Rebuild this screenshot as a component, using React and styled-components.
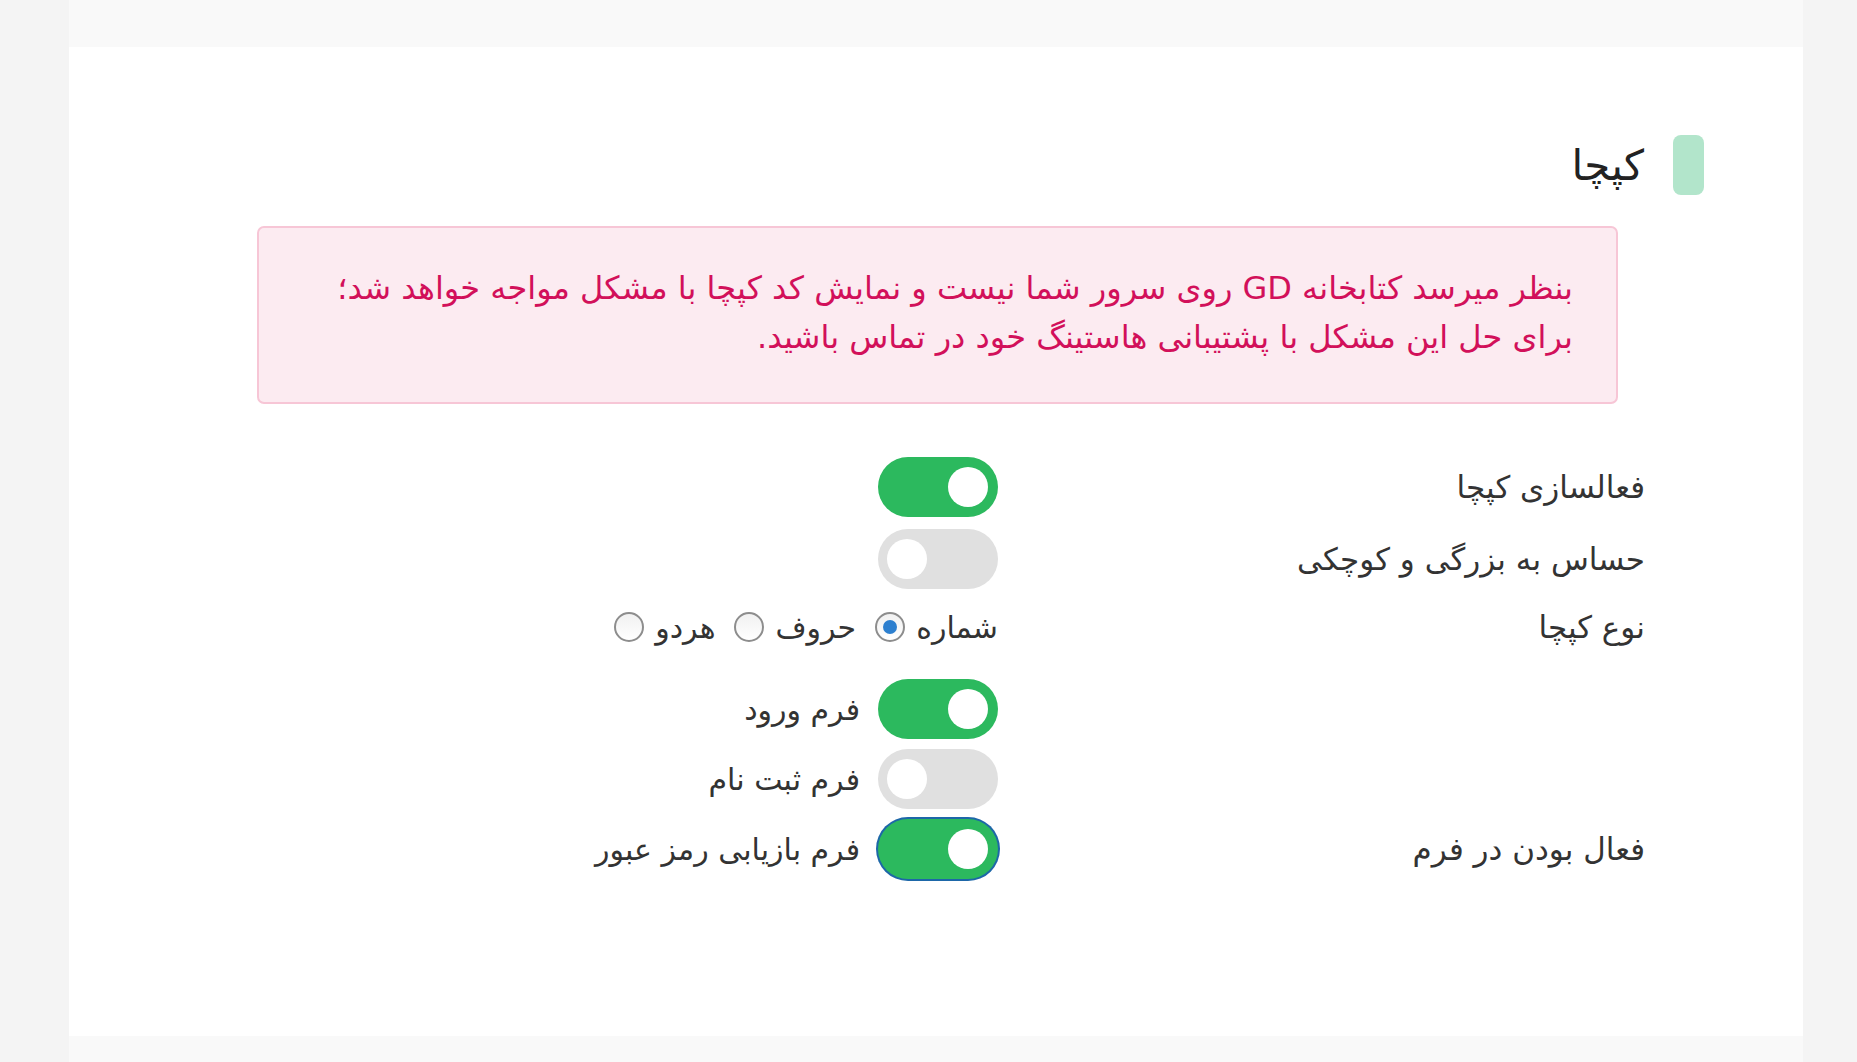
import React, { useState } from "react";
import styled, { createGlobalStyle } from "styled-components";

const GlobalStyle = createGlobalStyle`
  html, body {
    margin: 0;
    padding: 0;
    background: #f4f4f4;
  }
  body {
    font-family: "DejaVu Sans", "Noto Sans", sans-serif;
  }
`;

const Page = styled.div`
  margin-left: 69px;
  width: 1734px;
  min-height: 1062px;
  padding-top: 47px;
  box-sizing: border-box;
  background: #f9f9f9;
`;

const Card = styled.div`
  direction: rtl;
  background: #fff;
  height: 989px;
  box-sizing: border-box;
  padding: 88px 99px 0 0;
`;

const TitleRow = styled.div`
  display: flex;
  align-items: center;
  gap: 29px;
  height: 60px;
`;

const TitleBar = styled.span`
  width: 31px;
  height: 60px;
  border-radius: 8px;
  background: #b2e5cb;
`;

const Title = styled.h2`
  margin: 0;
  font-size: 42px;
  font-weight: normal;
  color: #222;
`;

const Alert = styled.div`
  margin: 31px 86px 53px 0;
  width: 1361px;
  box-sizing: border-box;
  padding: 36px 43px 0 20px;
  height: 178px;
  border: 2px solid #f7c6d6;
  border-radius: 7px;
  background: #fcebf1;
  color: #d2105a;
  font-size: 32px;
  line-height: 49px;
  white-space: nowrap;
`;

const Form = styled.div`
  padding-right: 59px;
`;

const Row = styled.div`
  display: flex;
  align-items: center;
  height: ${(p) => p.$h || 60}px;
  margin-top: ${(p) => p.$mt || 0}px;
`;

const Label = styled.div`
  width: 647px;
  flex: none;
  font-size: 31px;
  color: #333;
`;

const Controls = styled.div`
  display: flex;
  align-items: center;
`;

const Track = styled.button`
  position: relative;
  width: 120px;
  height: 60px;
  padding: 0;
  border: none;
  border-radius: 30px;
  cursor: pointer;
  background: ${(p) => (p.$on ? "#2cb95e" : "#e0e0e0")};
  box-shadow: ${(p) => (p.$focus ? "0 0 0 2px #1d67a8" : "none")};
  flex: none;
`;

const Knob = styled.span`
  position: absolute;
  top: 10px;
  width: 40px;
  height: 40px;
  border-radius: 50%;
  background: #fff;
  ${(p) => (p.$on ? "left: 70px;" : "left: 9px;")}
`;

const ToggleText = styled.span`
  margin-right: 18px;
  font-size: 30px;
  color: #333;
`;

const RadioGroup = styled.div`
  display: flex;
  align-items: center;
  gap: 19px;
`;

const RadioOption = styled.label`
  display: flex;
  align-items: center;
  gap: 11px;
  font-size: 30px;
  color: #333;
  cursor: pointer;
`;

const RadioCircle = styled.span`
  position: relative;
  width: 30px;
  height: 30px;
  box-sizing: border-box;
  border-radius: 50%;
  border: 2px solid #8d8d8d;
  background: linear-gradient(#f1f1f1, #ffffff);
  flex: none;
  &::after {
    content: "";
    display: ${(p) => (p.$checked ? "block" : "none")};
    position: absolute;
    top: 6px;
    left: 6px;
    width: 14px;
    height: 14px;
    border-radius: 50%;
    background: #2c7fcf;
  }
`;

function Toggle({ on, focus, onClick }) {
  return (
    <Track $on={on} $focus={focus} onClick={onClick}>
      <Knob $on={on} />
    </Track>
  );
}

export default function App() {
  const [state, setState] = useState({
    active: true,
    sensitive: false,
    login: true,
    register: false,
    recover: true,
  });
  const [type, setType] = useState("num");
  const flip = (k) => setState((s) => ({ ...s, [k]: !s[k] }));

  const radios = [
    { id: "num", text: "شماره" },
    { id: "letters", text: "حروف" },
    { id: "both", text: "هردو" },
  ];

  return (
    <>
      <GlobalStyle />
      <Page>
        <Card>
          <TitleRow>
            <TitleBar />
            <Title>کپچا</Title>
          </TitleRow>
          <Alert>
            بنظر میرسد کتابخانه GD روی سرور شما نیست و نمایش کد کپچا با مشکل مواجه خواهد شد؛
            <br />
            برای حل این مشکل با پشتیبانی هاستینگ خود در تماس باشید.
          </Alert>
          <Form>
            <Row>
              <Label>فعالسازی کپچا</Label>
              <Toggle on={state.active} onClick={() => flip("active")} />
            </Row>
            <Row $mt={12}>
              <Label>حساس به بزرگی و کوچکی</Label>
              <Toggle on={state.sensitive} onClick={() => flip("sensitive")} />
            </Row>
            <Row $h={40} $mt={18}>
              <Label>نوع کپچا</Label>
              <RadioGroup>
                {radios.map((r) => (
                  <RadioOption key={r.id} onClick={() => setType(r.id)}>
                    {r.text}
                    <RadioCircle $checked={type === r.id} />
                  </RadioOption>
                ))}
              </RadioGroup>
            </Row>
            <Row $mt={32}>
              <Label />
              <Controls>
                <Toggle on={state.login} onClick={() => flip("login")} />
                <ToggleText>فرم ورود</ToggleText>
              </Controls>
            </Row>
            <Row $mt={10}>
              <Label />
              <Controls>
                <Toggle on={state.register} onClick={() => flip("register")} />
                <ToggleText>فرم ثبت نام</ToggleText>
              </Controls>
            </Row>
            <Row $mt={10}>
              <Label>فعال بودن در فرم</Label>
              <Controls>
                <Toggle on={state.recover} focus onClick={() => flip("recover")} />
                <ToggleText>فرم بازیابی رمز عبور</ToggleText>
              </Controls>
            </Row>
          </Form>
        </Card>
      </Page>
    </>
  );
}
